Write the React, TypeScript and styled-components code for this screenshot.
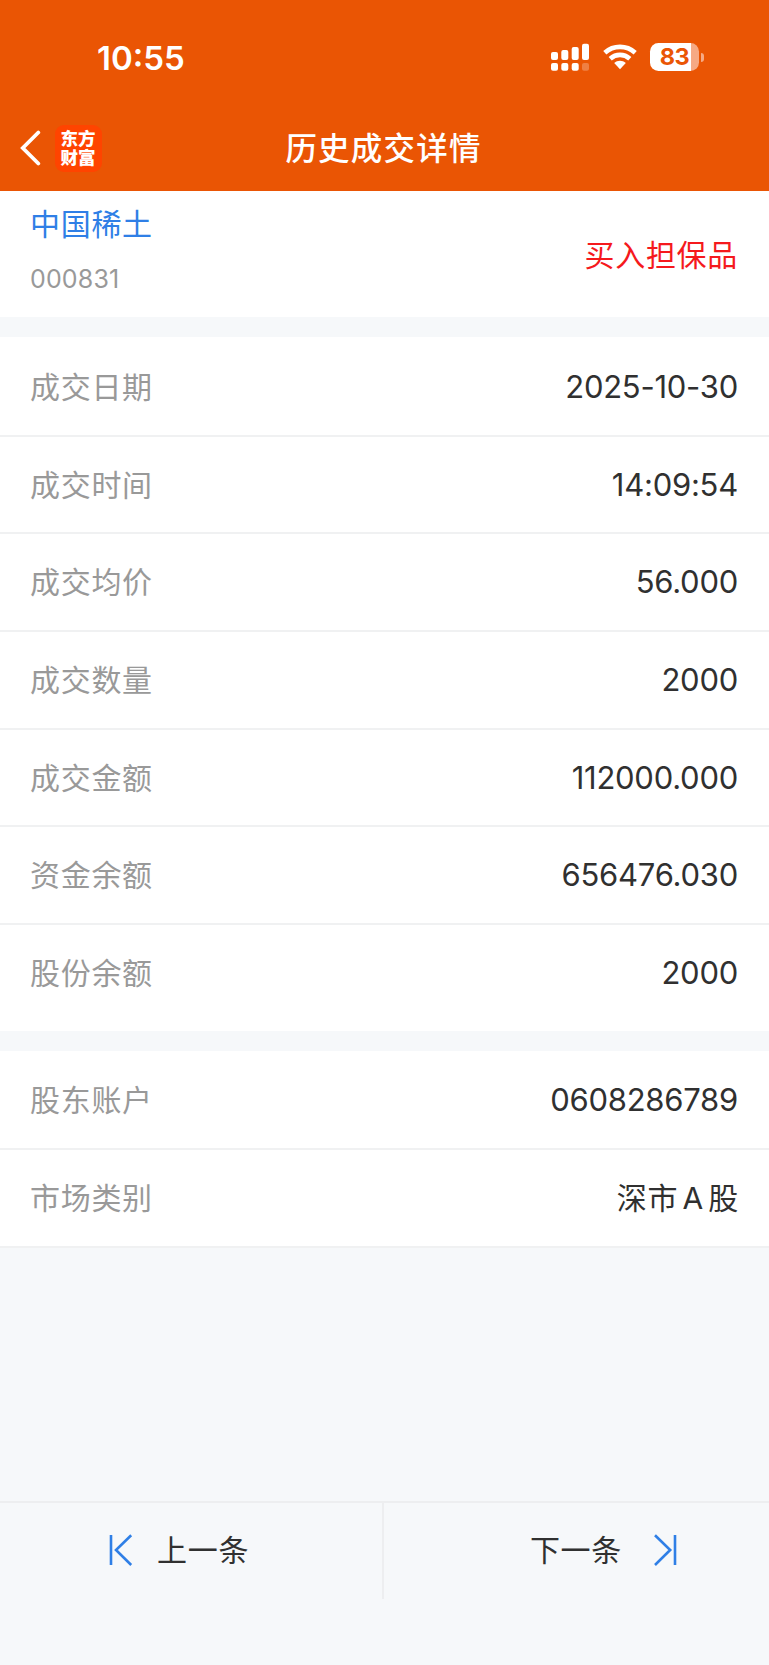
import React from "react";
import styled, { createGlobalStyle } from "styled-components";

const Global = createGlobalStyle`
  *, *::before, *::after { box-sizing: border-box; }
  body { margin: 0; background: #f6f8fa; }
`;

const Screen = styled.div`
  width: 769px;
  height: 1665px;
  display: flex;
  flex-direction: column;
  background: #f6f8fa;
  color: #303030;
  font-family: Inter, "Noto Sans CJK SC", sans-serif;
`;

const Header = styled.header`
  height: 191px;
  flex: none;
  background: #ea5504;
  color: #fff;
`;

const StatusBar = styled.div`
  height: 105px;
  padding: 10px 70px 0 97px;
  display: flex;
  align-items: center;
  justify-content: space-between;
`;

const Clock = styled.span`
  font-size: 33px;
  font-weight: 600;
  line-height: 40px;
`;

const StatusIcons = styled.div`
  display: flex;
  align-items: center;
  padding-bottom: 1px;
`;

const NavBar = styled.div`
  height: 86px;
  padding: 0 20px;
  display: grid;
  grid-template-columns: 1fr auto 1fr;
  align-items: center;
`;

const NavLeft = styled.div`
  display: flex;
  align-items: center;
  gap: 14px;
`;

const Logo = styled.div`
  width: 47px;
  height: 47px;
  padding: 3px 5.5px 0;
  border-radius: 9px;
  background: #ff4400;
  font: 900 17.5px/19.5px "Noto Sans CJK SC", sans-serif;
  word-break: break-all;
`;

const Title = styled.h1`
  margin: 2px 1px 0 -1px;
  font-size: 31.5px;
  font-weight: 500;
  line-height: 44px;
  letter-spacing: 1.2px;
`;

const Summary = styled.section`
  height: 126px;
  padding: 0 31px 0 30px;
  display: flex;
  justify-content: space-between;
  align-items: center;
  background: #fff;
`;

const StockInfo = styled.div`
  padding-bottom: 7px;
`;

const StockName = styled.div`
  font-size: 30px;
  line-height: 40px;
  letter-spacing: 0.7px;
  color: #2f7fe6;
`;

const StockCode = styled.div`
  margin-top: 17px;
  font-size: 25px;
  line-height: 36px;
  letter-spacing: 0.15px;
  color: #999;
`;

const Direction = styled.div`
  margin-top: 1px;
  font-size: 30px;
  line-height: 40px;
  letter-spacing: 0.7px;
  color: #f5191d;
`;

const Group = styled.section<{ $bottom?: number }>`
  margin-top: 20px;
  padding-bottom: ${(p) => p.$bottom ?? 0}px;
  background: #fff;
`;

const LastGroup = styled(Group)`
  border-bottom: 2px solid #f0f1f2;
`;

const Row = styled.div`
  height: 97.7px;
  padding: 0 30px;
  display: flex;
  align-items: center;
  justify-content: space-between;
  border-top: 2px solid transparent;
  & + & { border-top-color: #f0f1f2; }
  ${LastGroup} & { height: 97.5px; }
  ${LastGroup} &:first-child { border-top: 0; }
`;

const Label = styled.span`
  font-size: 30px;
  line-height: 40px;
  letter-spacing: 0.7px;
  color: #999;
`;

const Value = styled.span`
  font-size: 31px;
  line-height: 40px;
  letter-spacing: -0.25px;
  margin-right: 1px;
`;

const TextValue = styled.span`
  font-size: 30px;
  line-height: 40px;
  letter-spacing: 0.7px;
  word-spacing: -4.8px;
`;

const Footer = styled.footer`
  margin-top: auto;
  height: 164px;
  display: flex;
  align-items: flex-start;
  border-top: 2px solid #edeef0;
`;

const PagerButton = styled.button<{ $side: "prev" | "next" }>`
  width: ${(p) => (p.$side === "prev" ? 384 : 385)}px;
  height: 96px;
  margin: 0;
  padding: ${(p) => (p.$side === "prev" ? "0 0 3px 109px" : "0 92px 3px 0")};
  display: flex;
  align-items: center;
  justify-content: ${(p) => (p.$side === "prev" ? "flex-start" : "flex-end")};
  gap: ${(p) => (p.$side === "prev" ? 24 : 31)}px;
  border: 0;
  border-right: ${(p) => (p.$side === "prev" ? "2px solid #edeef0" : "0")};
  background: none;
  color: #303030;
  font: 400 30px/40px Inter, "Noto Sans CJK SC", sans-serif;
  letter-spacing: 0.7px;
`;

const StepIcon = ({ flip }: { flip?: boolean }) => (
  <svg width="24" height="32" viewBox="0 0 24 32" fill="none" stroke="#2f7fe6" strokeWidth="2.6">
    <path d={flip ? "M22 1v30M2 1.2 17.2 16 2 31" : "M2 1v30M22.2 1.2 7 16 22.2 31"} />
  </svg>
);

const Signal = () => (
  <svg width="39" height="28" viewBox="0 0 39 28" fill="#fff">
    <rect x="0" y="9" width="7" height="8" rx="2" />
    <rect x="10.3" y="7" width="7" height="10" rx="2" />
    <rect x="20.7" y="4" width="7" height="13" rx="2" />
    <rect x="31" y="0.7" width="7" height="16.3" rx="2" />
    <rect x="0" y="20" width="7" height="7.7" rx="2" />
    <rect x="10.3" y="20" width="7" height="7.7" rx="2" />
    <rect x="20.7" y="20" width="7" height="7.7" rx="2" />
    <rect x="31" y="20" width="7" height="7.7" rx="2" opacity="0.25" />
  </svg>
);

const Wifi = styled.svg`
  margin-left: 13px;
`;

const Battery = styled.div`
  position: relative;
  margin-left: 13px;
  width: 49px;
  height: 28px;
  border-radius: 8.5px;
  background: linear-gradient(to right, #fff 41px, #f6a984 41px);
  color: #ea5504;
  font-size: 23.5px;
  font-weight: 700;
  line-height: 28px;
  letter-spacing: -0.5px;
  text-align: center;
  &::after {
    content: "";
    position: absolute;
    left: 50.5px;
    top: 9.5px;
    width: 3px;
    height: 9px;
    border-radius: 0 3px 3px 0;
    background: #f6a984;
  }
`;

const trade = [
  ["成交日期", "2025-10-30"],
  ["成交时间", "14:09:54"],
  ["成交均价", "56.000"],
  ["成交数量", "2000"],
  ["成交金额", "112000.000"],
  ["资金余额", "656476.030"],
  ["股份余额", "2000"],
];

export default function App() {
  return (
    <Screen>
      <Global />
      <Header>
        <StatusBar>
          <Clock>10:55</Clock>
          <StatusIcons>
            <Signal />
            <Wifi width="34" height="26" viewBox="0 0 34 26" fill="none">
              <path d="M1.8 8.7C10.5.9 23.5.9 32.2 8.7" stroke="#fff" strokeWidth="4.7" />
              <path d="M7.2 14.7C13 9.6 21 9.6 26.8 14.7" stroke="#fff" strokeWidth="4.7" />
              <path d="M11.2 19.1c3.4-3.2 8.2-3.2 11.6 0L17 25.2z" fill="#fff" />
            </Wifi>
            <Battery>83</Battery>
          </StatusIcons>
        </StatusBar>
        <NavBar>
          <NavLeft>
            <svg width="21" height="36" viewBox="0 0 21 36" fill="none" stroke="#fff" strokeWidth="3.8" strokeLinecap="round">
              <path d="M18.3 2.5 2.8 18l15.5 15.5" />
            </svg>
            <Logo>东方财富</Logo>
          </NavLeft>
          <Title>历史成交详情</Title>
        </NavBar>
      </Header>
      <Summary>
        <StockInfo>
          <StockName>中国稀土</StockName>
          <StockCode>000831</StockCode>
        </StockInfo>
        <Direction>买入担保品</Direction>
      </Summary>
      <Group $bottom={10.1}>
        {trade.map(([label, value]) => (
          <Row key={label}>
            <Label>{label}</Label>
            <Value>{value}</Value>
          </Row>
        ))}
      </Group>
      <LastGroup>
        <Row>
          <Label>股东账户</Label>
          <Value>0608286789</Value>
        </Row>
        <Row>
          <Label>市场类别</Label>
          <TextValue>深市 A 股</TextValue>
        </Row>
      </LastGroup>
      <Footer>
        <PagerButton $side="prev">
          <StepIcon />
          上一条
        </PagerButton>
        <PagerButton $side="next">
          下一条
          <StepIcon flip />
        </PagerButton>
      </Footer>
    </Screen>
  );
}
